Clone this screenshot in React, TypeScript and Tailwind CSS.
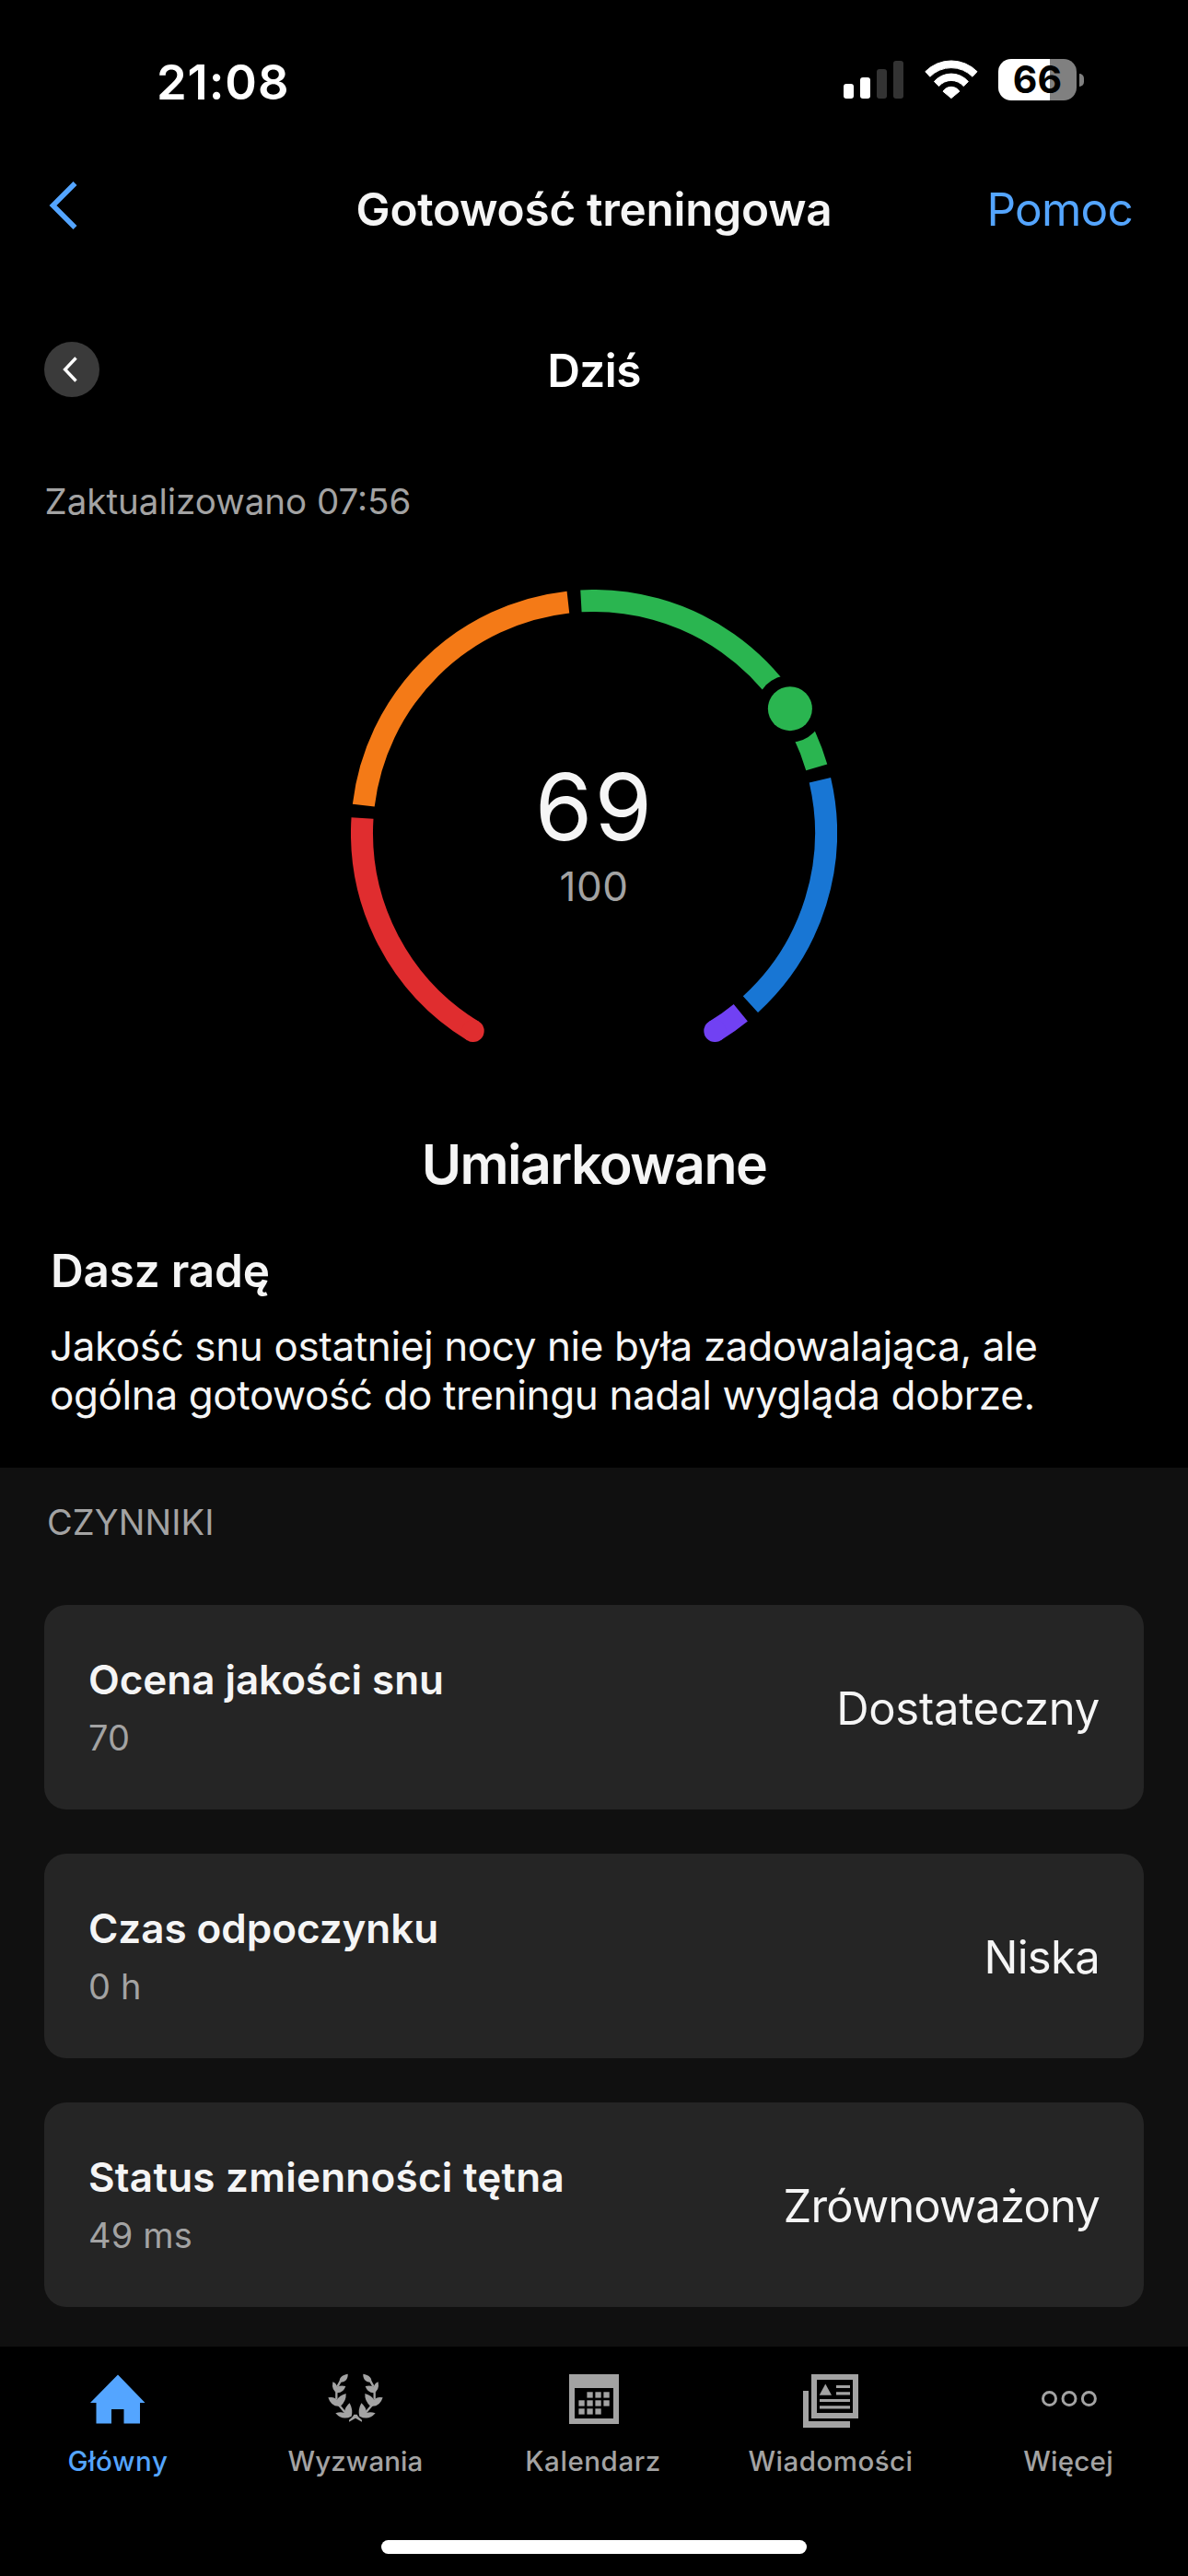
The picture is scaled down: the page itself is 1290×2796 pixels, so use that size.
import { ReactNode } from 'react'
import clsx from 'clsx'

const CENTER = 264
const RADIUS = 252

// degrees are clockwise, 0 is the top of the gauge
const segments = [
    {from: 211.4, to: 273.65, color: '#e02d2f'},
    {from: 276.8, to: 353.6, color: '#f47a17'},
    {from: 356.8, to: 433.6, color: '#2ab550'},
    {from: 76.85, to: 137.6, color: '#1876d4'},
    {from: 140.8, to: 148.6, color: '#7141f3'},
]

const factors = [
    {title: 'Ocena jakości snu', detail: '70', value: 'Dostateczny', titleTracking: 'tracking-[-0.05px]', tracking: 'tracking-[-0.25px]'},
    {title: 'Czas odpoczynku', detail: '0 h', value: 'Niska', titleTracking: 'tracking-[-0.05px]', tracking: 'tracking-[-0.7px]'},
    {title: 'Status zmienności tętna', detail: '49 ms', value: 'Zrównoważony', titleTracking: 'tracking-[0.25px]', tracking: 'tracking-[-0.85px]'},
]

function pointAt(deg: number) {
    const rad = (deg * Math.PI) / 180
    return {x: CENTER + RADIUS * Math.sin(rad), y: CENTER - RADIUS * Math.cos(rad)}
}

function arc(from: number, to: number) {
    const a = pointAt(from)
    const b = pointAt(to)
    return `M${a.x} ${a.y}A${RADIUS} ${RADIUS} 0 0 1 ${b.x} ${b.y}`
}

export default function App() {
    return (
        <div className="flex flex-col w-[1290px] h-[2796px] overflow-hidden bg-black text-[#f5f5f5] font-[Inter,sans-serif]">
            <StatusBar />
            <Header />
            <DayPicker />
            <p className="mt-1.5 pl-[48.5px] text-[38.5px] leading-[56px] text-[#a3a3a3]">Zaktualizowano 07:56</p>
            <Gauge />
            <h2 className="mt-24 text-center text-[59px] leading-[72px] font-semibold tracking-[-1.56px]">Umiarkowane</h2>
            <div className="mt-[49px] px-[54px]">
                <h3 className="pl-px text-[49.5px] leading-[60px] font-semibold tracking-[-0.2px]">Dasz radę</h3>
                <p className="mt-[26px] text-[44px] leading-[53px] tracking-[-0.39px]">
                    Jakość snu ostatniej nocy nie była zadowalająca, ale ogólna gotowość do treningu nadal wygląda dobrze.
                </p>
            </div>
            <Factors />
            <TabBar />
        </div>
    )
}

function StatusBar() {
    return (
        <div className="flex justify-between items-start h-[160px] shrink-0 pt-[60px] pl-[170px] pr-[113px]">
            <p className="pt-px text-[52.5px] leading-[56px] font-semibold tracking-[0.9px] text-white">21:08</p>
            <div className="flex mt-1 h-[45px]">
                <svg width="65" height="45" viewBox="0 0 65 45">
                    <rect x="0" y="27" width="11" height="16" rx="3" fill="#fff" />
                    <rect x="18" y="20" width="11" height="23" rx="3" fill="#fff" />
                    <rect x="36" y="11" width="11" height="32" rx="3" fill="#333" />
                    <rect x="54" y="2" width="11" height="41" rx="3" fill="#333" />
                </svg>
                <svg width="58" height="45" viewBox="0 0 58 45" className="ml-[23px]" fill="#fff" stroke="#fff" strokeWidth="1" strokeLinejoin="round">
                    <path d="M.8 13.7A39.5 39.5 0 0 1 57 13.7L52 19.2A32.6 32.6 0 0 0 5.8 19.2Z" />
                    <path d="M10.4 24.5A24.5 24.5 0 0 1 47.4 24.5L42.3 29.6A17.6 17.6 0 0 0 15.5 29.6Z" />
                    <path d="M20 35.2A10.5 10.5 0 0 1 37.8 35.2L28.9 42.6Z" />
                </svg>
                <div className="ml-[22px] w-[85px] h-[45px] rounded-[14px] bg-[linear-gradient(90deg,#fff_66%,#808080_66%)] text-center text-[41px] leading-[45px] font-bold text-black">66</div>
                <div className="self-center ml-[3px] w-[5px] h-[14px] rounded-r-full bg-[#808080]" />
            </div>
        </div>
    )
}

function Header() {
    return (
        <div className="grid grid-cols-[1fr_auto_1fr] items-center h-[134px] shrink-0 pl-[53px] pr-[60px] text-[49.5px] leading-[60px]">
            <svg width="31" height="52" viewBox="0 0 31 52" className="-mt-2">
                <path d="M28.5 2L4.5 26L28.5 50" fill="none" stroke="#54a5ff" strokeWidth="5.6" />
            </svg>
            <h1 className="ml-[7px] font-semibold tracking-[-0.28px]">Gotowość treningowa</h1>
            <a className="text-right tracking-[-0.77px] text-[#54a5ff]">Pomoc</a>
        </div>
    )
}

function DayPicker() {
    return (
        <div className="grid grid-cols-[60px_1fr_60px] items-center h-[216px] shrink-0 px-12">
            <button className="-mt-0.5 flex items-center justify-center w-[60px] h-[60px] pr-1 rounded-full bg-[#3a3a3a]">
                <svg width="16" height="28" viewBox="0 0 16 28">
                    <path d="M14.5 1.5L2.6 14L14.5 26.5" fill="none" stroke="#fff" strokeWidth="3.4" />
                </svg>
            </button>
            <p className="text-center text-[49.5px] leading-[60px] font-semibold tracking-[-0.57px] text-white">Dziś</p>
        </div>
    )
}

function Gauge() {
    const start = pointAt(211.4)
    const end = pointAt(148.6)
    const marker = pointAt(57.65)

    return (
        <div className="relative mt-[68px] mx-auto w-[528px] h-[492px] shrink-0">
            <svg width="528" height="492" viewBox="0 0 528 492">
                {segments.map((s) => (
                    <path key={s.color} d={arc(s.from, s.to)} fill="none" stroke={s.color} strokeWidth="24" />
                ))}
                <circle cx={start.x} cy={start.y} r="12" fill="#e02d2f" />
                <circle cx={end.x} cy={end.y} r="12" fill="#7141f3" />
                <circle cx={marker.x} cy={marker.y} r="36.5" fill="#000" />
                <circle cx={marker.x} cy={marker.y} r="24" fill="#2ab550" />
            </svg>
            <div className="absolute inset-0 flex flex-col items-center pt-[185px]">
                <p className="pl-px text-[101px] leading-[100px] tracking-[2px]">69</p>
                <p className="mt-[15px] text-[44px] leading-[44px] tracking-[0.5px] text-[#a3a3a3]">100</p>
            </div>
        </div>
    )
}

function Factors() {
    return (
        <div className="flex-1 mt-[52px] pt-[35px] bg-[#101010]">
            <p className="pl-[51px] text-[38px] leading-[48px] tracking-[0.1px] text-[#a3a3a3]">CZYNNIKI</p>
            <div className="flex flex-col gap-12 mt-[66px] px-12">
                {factors.map((f) => (
                    <div key={f.title} className="flex justify-between items-center h-[222px] px-12 rounded-[24px] bg-[#252525]">
                        <div className="self-start pt-[55px]">
                            <p className={clsx('text-[44px] leading-[52px] font-semibold', f.titleTracking)}>{f.title}</p>
                            <p className="mt-[13px] text-[38px] leading-[48px] tracking-[0.15px] text-[#a3a3a3]">{f.detail}</p>
                        </div>
                        <p className={clsx('pt-[3px] text-[49px] leading-[60px]', f.tracking)}>{f.value}</p>
                    </div>
                ))}
            </div>
        </div>
    )
}

function TabBar() {
    return (
        <div className="h-[249px] shrink-0 pt-[23px] bg-black">
            <div className="grid grid-cols-5">
                <Tab label="Główny" tracking="tracking-[0.59px]" active>
                    <path d="M35 7.5L64.5 38H59V60.5H41.5V45H28V60.5H11.5V38H5Z" />
                </Tab>
                <Tab label="Wyzwania" tracking="tracking-[0.1px]">
                    <g transform="scale(.3333)">
                        <LaurelBranch />
                        <g transform="translate(210) scale(-1 1)">
                            <LaurelBranch />
                        </g>
                        <path d="M100 152H110L114 159L126 170V176L105 164L84 176V170L96 159Z" />
                    </g>
                </Tab>
                <Tab label="Kalendarz" tracking="tracking-[0.57px]">
                    <path fillRule="evenodd" d="M9 7H63V61H9ZM15 22V55H57V22Z" />
                    {[28.4, 37.4, 46.4].map((x) => <rect key={x} x={x} y="26.3" width="6.3" height="6.3" />)}
                    {[19.4, 28.4, 37.4, 46.4].map((x) => <rect key={x} x={x} y="35.3" width="6.3" height="6.3" />)}
                    {[19.4, 28.4, 37.4].map((x) => <rect key={x} x={x} y="44.3" width="6.3" height="6.3" />)}
                </Tab>
                <Tab label="Wiadomości" tracking="tracking-[0.47px]">
                    <path fillRule="evenodd" d="M14 7H65V55H14ZM20 13V49H59V13Z" />
                    <path d="M5 25H11V58H56V65H5Z" />
                    <path d="M29.3 17.5L36 29.7H22.7Z" />
                    <path d="M41 19H56V22H41ZM41 26.2H56V29.4H41ZM23 34H56V37H23ZM23 41.2H56V44.4H23Z" />
                </Tab>
                <Tab label="Więcej" tracking="tracking-[0.26px]">
                    <g fill="none" stroke="currentColor" strokeWidth="3">
                        <circle cx="14.5" cy="33.5" r="7" />
                        <circle cx="36" cy="33.5" r="7" />
                        <circle cx="57.4" cy="33.5" r="7" />
                    </g>
                </Tab>
            </div>
            <div className="mt-[66px] mx-auto w-[462px] h-[15px] rounded-full bg-white" />
        </div>
    )
}

function Tab({label, tracking, active, children}: {label: string, tracking: string, active?: boolean, children: ReactNode}) {
    return (
        <div className={clsx('flex flex-col items-center', active ? 'text-[#54a5ff]' : 'text-[#a3a3a3]')}>
            <svg width="72" height="66" viewBox="0 0 72 66" fill="currentColor">{children}</svg>
            <p className={clsx('mt-[15px] pr-0.5 text-[29.5px] leading-[40px] font-medium', tracking)}>{label}</p>
        </div>
    )
}

function LaurelBranch() {
    return (
        <>
            <path d="M80 20C81 34 74 48 54 47C49 35 62 22 80 20Z" />
            <path d="M31 46Q41 49 46 62Q56 57 73 60Q66 81 46 82Q26 74 31 46Z" />
            <path d="M16 97Q36 93 44 105Q52 90 74 84Q76 108 56 125Q26 129 16 97Z" />
            <path d="M40 148Q54 142 68 146Q72 126 86 115Q98 138 92 158Q62 173 40 148Z" />
            <path d="M56 44L46 62M43 78V104M50 120L70 144" fill="none" stroke="currentColor" strokeWidth="7" />
        </>
    )
}
